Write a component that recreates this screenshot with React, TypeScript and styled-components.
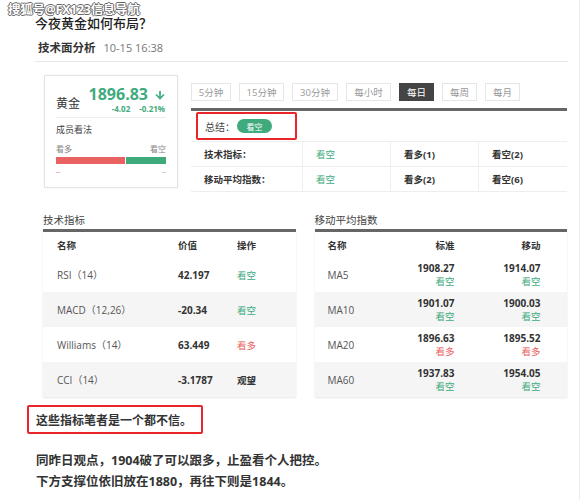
import React from 'react';
import styled, { createGlobalStyle } from 'styled-components';
import { ArrowDown } from 'lucide-react';

const GREEN = '#3fab7d';
const RED = '#e96161';

const GlobalStyle = createGlobalStyle`
  body {
    margin: 0;
    background: #fff;
    font-family: "Open Sans", "Noto Sans CJK SC", sans-serif;
    color: #333;
  }
`;

const Page = styled.div`
  position: relative;
  width: 580px;
  height: 500px;
  border-right: 1px solid #ececec;
  box-sizing: border-box;
  overflow: hidden;
`;

const Watermark = styled.div`
  position: absolute;
  left: 8px;
  top: 2px;
  font-size: 12.5px;
  font-weight: 700;
  line-height: 15px;
  color: #fff;
  text-shadow: -1px 0 #666, 1px 0 #666, 0 -1px #666, 0 1px #666;
  letter-spacing: -0.3px;
`;

const Header = styled.div`
  margin-left: 35px;
  width: 533px;
  padding-top: 14px;
  padding-bottom: 4px;
  border-bottom: 1px solid #e8e8e8;
`;

const Title = styled.div`
  font-size: 13px;
  line-height: 18px;
  color: #222;
  font-weight: 500;
`;

const Meta = styled.div`
  margin-top: 7px;
  margin-left: 3px;
  line-height: 18px;
  display: flex;
  align-items: center;
  gap: 8px;
`;

const MetaTitle = styled.span`
  font-size: 11.5px;
  font-weight: 700;
  color: #333;
`;

const MetaTime = styled.span`
  font-size: 11px;
  color: #777;
`;

const TopSection = styled.div`
  margin-top: 13px;
  margin-left: 44px;
  width: 523px;
  display: flex;
  gap: 13px;
`;

const Card = styled.div`
  width: 134px;
  height: 113px;
  box-sizing: border-box;
  border: 1px solid #e4e4e4;
  box-shadow: 0 0 2px rgba(0, 0, 0, 0.06);
  padding: 11px 11px 0;
`;

const CardHead = styled.div`
  display: flex;
  align-items: center;
  justify-content: space-between;
  height: 30px;
  border-bottom: 1px solid #eee;
`;

const Metal = styled.span`
  font-size: 12px;
  color: #333;
  margin-top: 2px;
`;

const PriceBlock = styled.div`
  display: flex;
  flex-direction: column;
  align-items: flex-end;
  gap: 1px;
  margin-top: -4px;
`;

const Price = styled.div`
  display: flex;
  align-items: center;
  gap: 6px;
  font-size: 16px;
  font-weight: 700;
  line-height: 17px;
  color: ${GREEN};
`;

const Change = styled.div`
  display: flex;
  gap: 9px;
  font-size: 8px;
  font-weight: 700;
  line-height: 10px;
  color: ${GREEN};
  margin-right: 1px;
`;

const Opinion = styled.div`
  font-size: 9px;
  color: #444;
  margin-top: 6px;
  line-height: 12px;
`;

const VoteLabels = styled.div`
  display: flex;
  justify-content: space-between;
  font-size: 8px;
  color: #888;
  margin-top: 8px;
  line-height: 10px;
`;

const Bar = styled.div`
  display: flex;
  gap: 1px;
  height: 7px;
  margin-top: 3px;
`;

const BarPart = styled.div<{ $color: string; $grow: number }>`
  background: ${(p) => p.$color};
  flex: ${(p) => p.$grow};
`;

const VoteCounts = styled.div`
  display: flex;
  justify-content: space-between;
  font-size: 7px;
  line-height: 10px;
  margin-top: 3px;
  color: #999;

  & > span:first-child {
    color: ${RED};
  }
`;

const Panel = styled.div`
  flex: 1;
  padding-top: 8px;
`;

const Tabs = styled.div`
  display: flex;
  gap: 8px;
`;

const Tab = styled.div<{ $w: number; $active?: boolean }>`
  width: ${(p) => p.$w}px;
  height: 18px;
  box-sizing: border-box;
  border: 1px solid ${(p) => (p.$active ? '#444' : '#e6e6e6')};
  background: ${(p) => (p.$active ? '#444' : '#fff')};
  color: ${(p) => (p.$active ? '#fff' : '#999')};
  font-size: 9.5px;
  display: flex;
  align-items: center;
  justify-content: center;
`;

const Summary = styled.div`
  margin-top: 7px;
  border-top: 3px solid #666;
`;

const SummaryRow = styled.div`
  height: 30px;
  padding: 1px 0 0 5px;
  box-sizing: border-box;
`;

const RedBox = styled.div<{ $w: number; $h: number }>`
  width: ${(p) => p.$w}px;
  height: ${(p) => p.$h}px;
  box-sizing: border-box;
  border: 2px solid #e8262a;
  border-radius: 2px;
  display: flex;
  align-items: center;
  padding-left: 7px;
`;

const SummaryLabel = styled.span`
  font-size: 10px;
  color: #444;
  font-family: "Noto Sans CJK SC", sans-serif;
`;

const Pill = styled.span`
  margin-left: 2px;
  background: ${GREEN};
  color: #fff;
  font-size: 8px;
  height: 14px;
  width: 35px;
  border-radius: 7px;
  display: inline-flex;
  align-items: center;
  justify-content: center;
`;

const SignalRow = styled.div`
  display: grid;
  grid-template-columns: 111px 88px 88px 1fr;
  height: 24px;
  border-top: 1px solid #eee;
  border-bottom: 1px solid #eee;
  margin-bottom: -1px;
`;

const SignalCell = styled.div<{ $tone?: 'green' | 'bold' | 'label' }>`
  display: flex;
  align-items: center;
  padding-left: 13px;
  font-size: 9.5px;
  border-left: 1px solid #eee;
  color: ${(p) => (p.$tone === 'green' ? GREEN : '#333')};
  font-weight: ${(p) => (p.$tone === 'green' ? 400 : 700)};

  &:first-child {
    border-left: none;
  }
`;

const BottomSection = styled.div`
  margin-top: 22px;
  margin-left: 43px;
  width: 524px;
  display: flex;
  gap: 19px;
`;

const Column = styled.div`
  flex: 1;
`;

const SectionLabel = styled.div`
  font-size: 10.5px;
  line-height: 14px;
  color: #444;
  margin-bottom: 2px;
`;

const Table = styled.div`
  border-top: 3px solid #666;
  box-shadow: 0 1px 2px rgba(0, 0, 0, 0.1);
`;

const Row = styled.div<{ $cols: string; $head?: boolean; $shade?: boolean }>`
  display: grid;
  grid-template-columns: ${(p) => p.$cols};
  height: ${(p) => (p.$head ? 25 : 35)}px;
  align-items: center;
  background: ${(p) => (p.$shade ? '#f5f5f5' : '#fff')};
  font-size: 9.5px;
  font-weight: ${(p) => (p.$head ? 700 : 400)};
  color: #333;
`;

const NameCell = styled.div<{ $pad: number }>`
  padding-left: ${(p) => p.$pad}px;
  font-size: 10px;
  color: #555;
`;

const HeadCell = styled.div<{ $right?: boolean; $pad?: number }>`
  text-align: ${(p) => (p.$right ? 'right' : 'left')};
  padding-left: ${(p) => p.$pad || 0}px;
`;

const Value = styled.div`
  font-weight: 700;
  font-size: 10px;
  color: #333;
`;

const Action = styled.div<{ $kind: string }>`
  font-size: 9.5px;
  color: ${(p) => (p.$kind === '看空' ? GREEN : p.$kind === '看多' ? RED : '#333')};
  font-weight: ${(p) => (p.$kind === '观望' ? 700 : 400)};
`;

const MaCell = styled.div`
  text-align: right;
  line-height: 13px;
`;

const Text = styled.div`
  margin-left: 27px;
  margin-top: 8px;
`;

const Callout = styled.span`
  font-size: 12px;
  font-weight: 700;
  color: #333;
`;

const Para = styled.p`
  margin: 16px 0 0 9px;
  font-size: 12.5px;
  line-height: 21px;
  font-weight: 700;
  color: #333;
`;

const tabs = [
  { label: '5分钟', w: 40 },
  { label: '15分钟', w: 45 },
  { label: '30分钟', w: 46 },
  { label: '每小时', w: 45 },
  { label: '每日', w: 35, active: true },
  { label: '每周', w: 35 },
  { label: '每月', w: 35 },
];

const indicators = [
  { name: 'RSI（14）', value: '42.197', action: '看空' },
  { name: 'MACD（12,26）', value: '-20.34', action: '看空' },
  { name: 'Williams（14）', value: '63.449', action: '看多' },
  { name: 'CCI（14）', value: '-3.1787', action: '观望' },
];

const averages = [
  { name: 'MA5', std: '1908.27', stdA: '看空', mov: '1914.07', movA: '看空' },
  { name: 'MA10', std: '1901.07', stdA: '看空', mov: '1900.03', movA: '看空' },
  { name: 'MA20', std: '1896.63', stdA: '看多', mov: '1895.52', movA: '看多' },
  { name: 'MA60', std: '1937.83', stdA: '看空', mov: '1954.05', movA: '看空' },
];

const leftCols = '135px 59px 1fr';
const rightCols = '80px 60px 86px 1fr';

const App = () => {
  return (
    <Page>
      <GlobalStyle />
      <Watermark>搜狐号@FX123信息导航</Watermark>
      <Header>
        <Title>今夜黄金如何布局？</Title>
        <Meta>
          <MetaTitle>技术面分析</MetaTitle>
          <MetaTime>10-15 16:38</MetaTime>
        </Meta>
      </Header>

      <TopSection>
        <Card>
          <CardHead>
            <Metal>黄金</Metal>
            <PriceBlock>
              <Price>
                1896.83
                <ArrowDown size={12} strokeWidth={3.5} />
              </Price>
              <Change>
                <span>-4.02</span>
                <span>-0.21%</span>
              </Change>
            </PriceBlock>
          </CardHead>
          <Opinion>成员看法</Opinion>
          <VoteLabels>
            <span>看多</span>
            <span>看空</span>
          </VoteLabels>
          <Bar>
            <BarPart $color={RED} $grow={69} />
            <BarPart $color={GREEN} $grow={40} />
          </Bar>
          <VoteCounts>
            <span>--</span>
            <span>--</span>
          </VoteCounts>
        </Card>

        <Panel>
          <Tabs>
            {tabs.map((t) => (
              <Tab key={t.label} $w={t.w} $active={t.active}>
                {t.label}
              </Tab>
            ))}
          </Tabs>
          <Summary>
            <SummaryRow>
              <RedBox $w={101} $h={28}>
                <SummaryLabel>总结：</SummaryLabel>
                <Pill>看空</Pill>
              </RedBox>
            </SummaryRow>
            <SignalRow>
              <SignalCell $tone="label">技术指标：</SignalCell>
              <SignalCell $tone="green">看空</SignalCell>
              <SignalCell $tone="bold">看多(1)</SignalCell>
              <SignalCell $tone="bold">看空(2)</SignalCell>
            </SignalRow>
            <SignalRow>
              <SignalCell $tone="label">移动平均指数：</SignalCell>
              <SignalCell $tone="green">看空</SignalCell>
              <SignalCell $tone="bold">看多(2)</SignalCell>
              <SignalCell $tone="bold">看空(6)</SignalCell>
            </SignalRow>
          </Summary>
        </Panel>
      </TopSection>

      <BottomSection>
        <Column>
          <SectionLabel>技术指标</SectionLabel>
          <Table>
            <Row $cols={leftCols} $head>
              <HeadCell $pad={14}>名称</HeadCell>
              <HeadCell>价值</HeadCell>
              <HeadCell>操作</HeadCell>
            </Row>
            {indicators.map((r, i) => (
              <Row key={r.name} $cols={leftCols} $shade={i % 2 === 1}>
                <NameCell $pad={14}>{r.name}</NameCell>
                <Value>{r.value}</Value>
                <Action $kind={r.action}>{r.action}</Action>
              </Row>
            ))}
          </Table>
        </Column>
        <Column>
          <SectionLabel>移动平均指数</SectionLabel>
          <Table>
            <Row $cols={rightCols} $head>
              <HeadCell $pad={13}>名称</HeadCell>
              <HeadCell $right>标准</HeadCell>
              <HeadCell $right>移动</HeadCell>
            </Row>
            {averages.map((r, i) => (
              <Row key={r.name} $cols={rightCols} $shade={i % 2 === 1}>
                <NameCell $pad={13}>{r.name}</NameCell>
                <MaCell>
                  <Value>{r.std}</Value>
                  <Action $kind={r.stdA}>{r.stdA}</Action>
                </MaCell>
                <MaCell>
                  <Value>{r.mov}</Value>
                  <Action $kind={r.movA}>{r.movA}</Action>
                </MaCell>
              </Row>
            ))}
          </Table>
        </Column>
      </BottomSection>

      <Text>
        <RedBox $w={176} $h={29}>
          <Callout>这些指标笔者是一个都不信。</Callout>
        </RedBox>
        <Para>
          同昨日观点，1904破了可以跟多，止盈看个人把控。
          <br />
          下方支撑位依旧放在1880，再往下则是1844。
        </Para>
      </Text>
    </Page>
  );
};

export default App;
